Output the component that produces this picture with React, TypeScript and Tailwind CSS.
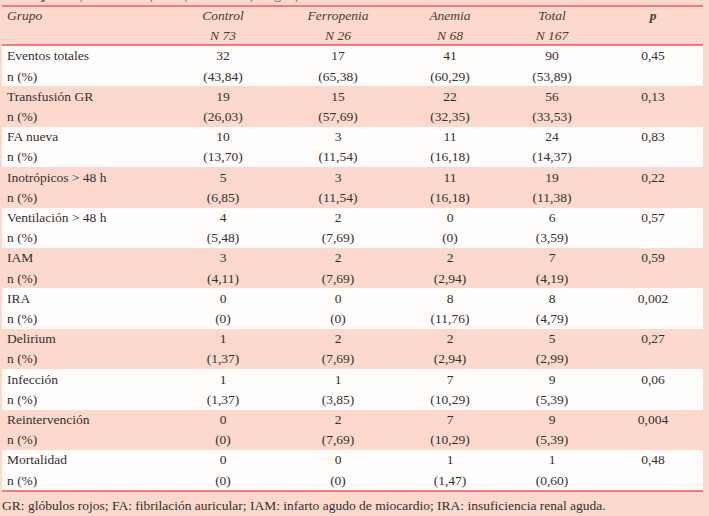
import React from "react";

type Row = { label: string; v: string[]; pct: string[]; p: string };

const rows: Row[] = [
  { label: "Eventos totales", v: ["32", "17", "41", "90"], pct: ["(43,84)", "(65,38)", "(60,29)", "(53,89)"], p: "0,45" },
  { label: "Transfusión GR", v: ["19", "15", "22", "56"], pct: ["(26,03)", "(57,69)", "(32,35)", "(33,53)"], p: "0,13" },
  { label: "FA nueva", v: ["10", "3", "11", "24"], pct: ["(13,70)", "(11,54)", "(16,18)", "(14,37)"], p: "0,83" },
  { label: "Inotrópicos > 48 h", v: ["5", "3", "11", "19"], pct: ["(6,85)", "(11,54)", "(16,18)", "(11,38)"], p: "0,22" },
  { label: "Ventilación > 48 h", v: ["4", "2", "0", "6"], pct: ["(5,48)", "(7,69)", "(0)", "(3,59)"], p: "0,57" },
  { label: "IAM", v: ["3", "2", "2", "7"], pct: ["(4,11)", "(7,69)", "(2,94)", "(4,19)"], p: "0,59" },
  { label: "IRA", v: ["0", "0", "8", "8"], pct: ["(0)", "(0)", "(11,76)", "(4,79)"], p: "0,002" },
  { label: "Delirium", v: ["1", "2", "2", "5"], pct: ["(1,37)", "(7,69)", "(2,94)", "(2,99)"], p: "0,27" },
  { label: "Infección", v: ["1", "1", "7", "9"], pct: ["(1,37)", "(3,85)", "(10,29)", "(5,39)"], p: "0,06" },
  { label: "Reintervención", v: ["0", "2", "7", "9"], pct: ["(0)", "(7,69)", "(10,29)", "(5,39)"], p: "0,004" },
  { label: "Mortalidad", v: ["0", "0", "1", "1"], pct: ["(0)", "(0)", "(1,47)", "(0,60)"], p: "0,48" },
];

const grid = "grid grid-cols-[164px_114px_116px_108px_96px_103px]";

export default function App() {
  return (
    <div
      className="w-[709px] h-[516px] overflow-hidden bg-[#fcd9cc] text-[#333030] text-[13.5px]"
      style={{ fontFamily: '"Liberation Serif", "Times New Roman", serif' }}
    >
      {/* clipped title */}
      <div className="h-[5px] overflow-hidden">
        <div
          className="-mt-[13px] pl-[2px] text-[13px] leading-[15px] whitespace-nowrap text-[#8a7a76]"
          style={{ fontFamily: '"Open Sans", "Liberation Sans", sans-serif' }}
        >
          <span className="text-[#d9304a] font-bold">Tabla y</span> Complicaciones postoperatorias por grupos
        </div>
      </div>

      <div className="ml-[2px] w-[701px]">
        <div className="h-[2px] bg-[#f07c7c]" />
        {/* header */}
        <div className={`${grid} italic text-[#4f3a35]`}>
          <div className="h-[18px] flex items-center pl-[5px]">Grupo</div>
          <div className="h-[18px] flex items-center justify-center">Control</div>
          <div className="h-[18px] flex items-center justify-center">Ferropenia</div>
          <div className="h-[18px] flex items-center justify-center">Anemia</div>
          <div className="h-[18px] flex items-center justify-center">Total</div>
          <div className="h-[18px] flex items-center justify-center pl-[3px] font-bold">p</div>
          <div className="h-[19px]" />
          <div className="h-[19px] flex items-center justify-center pt-[3px]">N 73</div>
          <div className="h-[19px] flex items-center justify-center pt-[3px]">N 26</div>
          <div className="h-[19px] flex items-center justify-center pt-[3px]">N 68</div>
          <div className="h-[19px] flex items-center justify-center pt-[3px]">N 167</div>
          <div className="h-[19px]" />
        </div>
        <div className="h-[2px] bg-[#f07c7c]" />

        {/* body */}
        {rows.map((r, i) => (
          <div
            key={r.label}
            className={`${grid} h-[40.4px] grid-rows-2 ${i % 2 === 0 ? "bg-[#fffdfc]" : ""}`}
          >
            <div className="flex items-center pl-[5px] pt-[1px]">{r.label}</div>
            {r.v.map((x, j) => (
              <div key={j} className="flex items-center justify-center pt-[1px]">
                {x}
              </div>
            ))}
            <div className="flex items-center justify-center pl-[3px] pt-[1px]">{r.p}</div>
            <div className="flex items-center pl-[5px] pt-[1px]">n (%)</div>
            {r.pct.map((x, j) => (
              <div key={j} className="flex items-center justify-center pt-[1px]">
                {x}
              </div>
            ))}
            <div />
          </div>
        ))}
        <div className="h-[2px] bg-[#f07c7c]" />
      </div>
      <div className="pl-[2px] pt-[4px] whitespace-nowrap">
        GR: glóbulos rojos; FA: fibrilación auricular; IAM: infarto agudo de miocardio; IRA: insuficiencia renal aguda.
      </div>
    </div>
  );
}
